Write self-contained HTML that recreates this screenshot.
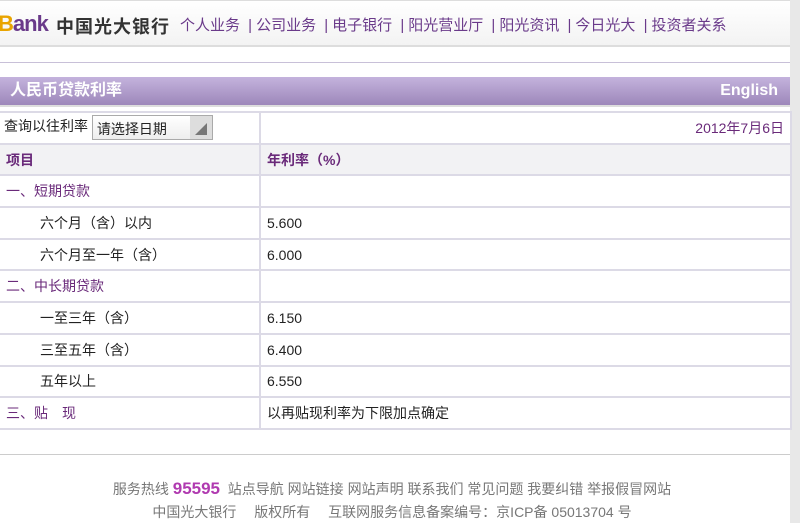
<!DOCTYPE html>
<html><head><meta charset="utf-8"><style>
*{margin:0;padding:0;box-sizing:border-box}
body{width:800px;height:523px;overflow:hidden;background:#fff;font-family:"Liberation Sans","Noto Sans CJK SC",sans-serif;position:relative;color:#222}
.abs{position:absolute}
.hdr{left:0;top:0;width:800px;height:47px;background:linear-gradient(#fff,#f3f3f3);border-top:1px solid #ddd;border-bottom:2px solid #ddd}
.nav{left:180px;top:14px;font-size:15px;color:#6a3a8a;white-space:nowrap}
.nav span{margin:0 4px}
.title{left:0;top:77px;width:792px;height:30px;background:linear-gradient(#c4b3dd,#9d87ba);color:#fff;font-weight:bold;font-size:16px;border-bottom:2px solid #ddd;line-height:27px}
table{position:absolute;left:0;top:111px;width:792px;border-collapse:collapse;font-size:14px}
td{border:2px solid #dcdae6;height:31.7px;padding:0 6px;white-space:nowrap}
td:first-child{width:260px;border-left:none}
.p{color:#6a2a7a}
.ind{padding-left:40px}
.foot{left:0;width:784px;text-align:center;color:#777;font-size:14px;white-space:nowrap}
</style></head><body>
<div class="abs hdr"></div>
<div class="abs" style="left:-2px;top:11px;font-size:22px;font-weight:bold;letter-spacing:-1px"><span style="color:#e9a400">B</span><span style="color:#6a3a8a">ank</span></div>
<div class="abs" style="left:56px;top:13px;font-size:18px;color:#333;font-weight:bold;letter-spacing:1px">中国光大银行</div>
<div class="abs nav">个人业务 <span>|</span>公司业务 <span>|</span>电子银行 <span>|</span>阳光营业厅 <span>|</span>阳光资讯 <span>|</span>今日光大 <span>|</span>投资者关系</div>
<div class="abs" style="left:0;top:62px;width:800px;height:1px;background:#c8c0d8"></div>
<div class="abs title"><span style="position:absolute;left:10px;top:0">人民币贷款利率</span><span style="position:absolute;right:14px;top:0">English</span></div>
<div class="abs" style="left:790px;top:0;width:10px;height:523px;background:#e8e8e8"></div>
<table>
<tr><td style="padding-left:4px">查询以往利率 <span style="display:inline-block;width:121px;height:25px;border:1px solid #aaa;background:linear-gradient(#fff,#eee);vertical-align:middle;padding:3px 4px;position:relative">请选择日期<span style="position:absolute;right:0;top:0;width:22px;height:23px;background:#ddd"><span style="position:absolute;right:5px;bottom:4px;border-left:12px solid transparent;border-bottom:12px solid #777"></span></span></span></td><td class="p" style="text-align:right">2012年7月6日</td></tr>
<tr style="background:#f2f2f4;font-weight:bold"><td class="p">项目</td><td class="p">年利率（%）</td></tr>
<tr><td class="p">一、短期贷款</td><td></td></tr>
<tr><td class="ind">六个月（含）以内</td><td>5.600</td></tr>
<tr><td class="ind">六个月至一年（含）</td><td>6.000</td></tr>
<tr><td class="p">二、中长期贷款</td><td></td></tr>
<tr><td class="ind">一至三年（含）</td><td>6.150</td></tr>
<tr><td class="ind">三至五年（含）</td><td>6.400</td></tr>
<tr><td class="ind">五年以上</td><td>6.550</td></tr>
<tr><td class="p">三、贴　现</td><td>以再贴现利率为下限加点确定</td></tr>
</table>
<div class="abs" style="left:0;top:454px;width:790px;height:1px;background:#ccc"></div>
<div class="abs foot" style="top:479px">服务热线 <b style="color:#b03ab0;font-size:17px">95595</b>&nbsp; 站点导航 网站链接 网站声明 联系我们 常见问题 我要纠错 举报假冒网站</div>
<div class="abs foot" style="top:502px">中国光大银行　 版权所有　 互联网服务信息备案编号：京ICP备 05013704 号</div>
</body></html>
